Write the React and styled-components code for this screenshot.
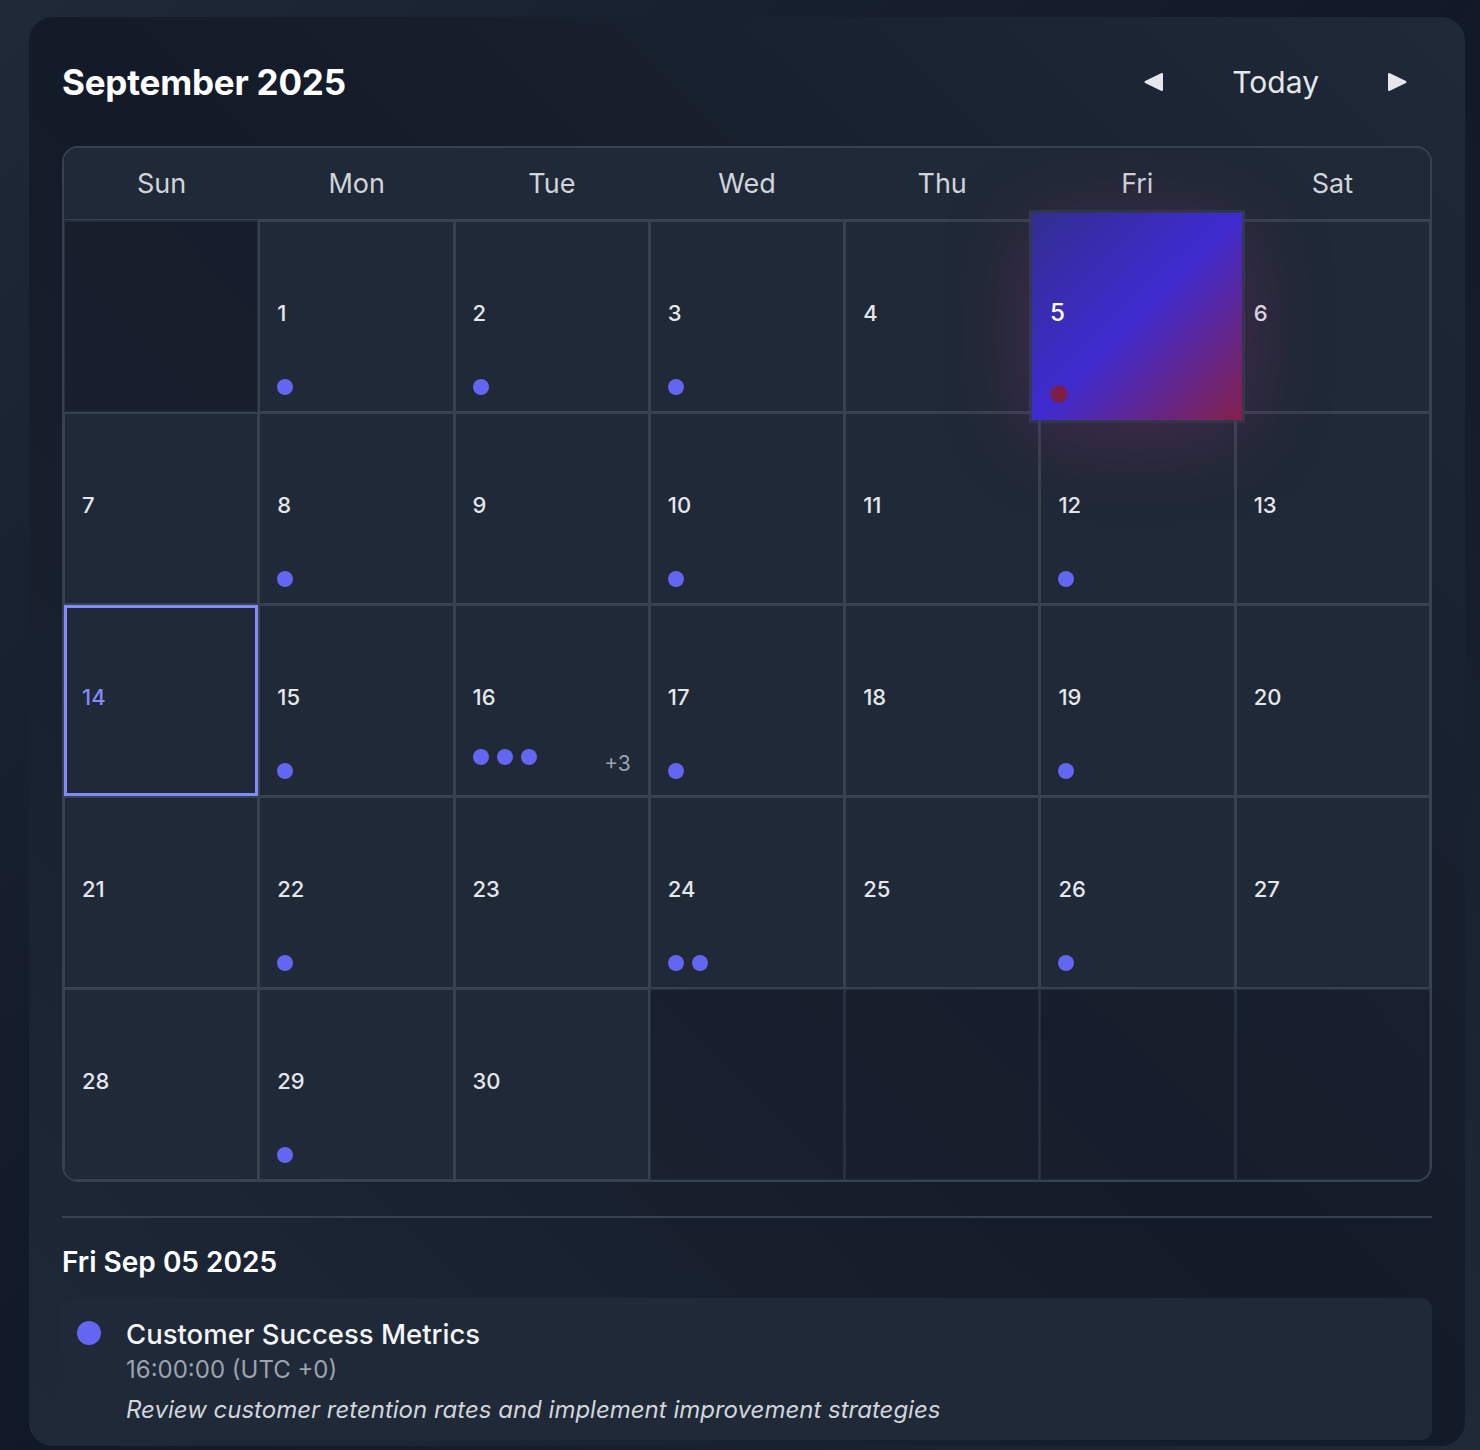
import React from 'react';
import styled, { createGlobalStyle } from 'styled-components';

const GlobalStyle = createGlobalStyle`
  html, body {
    margin: 0;
    padding: 0;
  }
  body {
    min-height: 1450px;
    background: linear-gradient(135deg, #1f2937 0%, #111827 50%, #1f2937 100%);
    font-family: Inter, "Noto Sans", "Liberation Sans", sans-serif;
    color: #e5e7eb;
    -webkit-font-smoothing: antialiased;
  }
`;

const DAY_NAMES = ['Sun', 'Mon', 'Tue', 'Wed', 'Thu', 'Fri', 'Sat'];

// event count per day of September 2025
const EVENT_COUNTS = {
  1: 1, 2: 1, 3: 1, 5: 1, 8: 1, 10: 1, 12: 1, 15: 1, 16: 6,
  17: 1, 19: 1, 22: 1, 24: 2, 26: 1, 29: 1,
};

const TODAY = 14;
const SELECTED = 5;
const FIRST_WEEKDAY = 1; // Sep 1 2025 is a Monday
const DAYS_IN_MONTH = 30;
const MAX_DOTS = 3;

const ArrowIcon = ({ direction }) => (
  <svg width="21" height="20" viewBox="0 0 21 20">
    {direction === 'left' ? (
      <path d="M19 2 L19 18 L2.5 10 Z" fill="currentColor" stroke="currentColor" strokeWidth="2" strokeLinejoin="round" />
    ) : (
      <path d="M2 2 L2 18 L18.5 10 Z" fill="currentColor" stroke="currentColor" strokeWidth="2" strokeLinejoin="round" />
    )}
  </svg>
);

const buildCells = () => {
  const cells = [];
  for (let i = 0; i < FIRST_WEEKDAY; i++) cells.push(null);
  for (let d = 1; d <= DAYS_IN_MONTH; d++) cells.push(d);
  while (cells.length % 7 !== 0) cells.push(null);
  return cells;
};

const DayCell = ({ day }) => {
  if (day === null) return <EmptyCell />;
  const count = EVENT_COUNTS[day] || 0;
  const shown = Math.min(count, MAX_DOTS);
  const isSelected = day === SELECTED;
  const isToday = day === TODAY;

  return (
    <Cell $selected={isSelected} $today={isToday}>
      <DayNumber $selected={isSelected} $today={isToday}>{day}</DayNumber>
      <DotRow>
        <Dots>
          {Array.from({ length: shown }).map((_, i) => (
            <Dot key={i} $selected={isSelected} />
          ))}
        </Dots>
        {count > MAX_DOTS && <MoreCount>+{count - MAX_DOTS}</MoreCount>}
      </DotRow>
    </Cell>
  );
};

const App = () => {
  const cells = buildCells();

  return (
    <>
      <GlobalStyle />
      <Page>
        <Card>
          <Header>
            <MonthTitle>September 2025</MonthTitle>
            <Nav>
              <NavButton aria-label="Previous month"><ArrowIcon direction="left" /></NavButton>
              <NavButton>Today</NavButton>
              <NavButton aria-label="Next month"><ArrowIcon direction="right" /></NavButton>
            </Nav>
          </Header>

          <CalendarFrame>
            <WeekHeader>
              {DAY_NAMES.map(name => (
                <WeekDay key={name}>{name}</WeekDay>
              ))}
            </WeekHeader>
            <DaysGrid>
              {cells.map((day, i) => (
                <DayCell key={i} day={day} />
              ))}
            </DaysGrid>
          </CalendarFrame>

          <Divider />

          <SelectedDate>Fri Sep 05 2025</SelectedDate>

          <EventCard>
            <EventDot />
            <EventBody>
              <EventTitle>Customer Success Metrics</EventTitle>
              <EventTime>16:00:00 (UTC +0)</EventTime>
              <EventDescription>
                Review customer retention rates and implement improvement strategies
              </EventDescription>
            </EventBody>
          </EventCard>
        </Card>
      </Page>
    </>
  );
};

const Page = styled.div`
  padding: 17px 15px 0 29px;
`;

const Card = styled.div`
  background: linear-gradient(45deg, #1f2937 0%, #131a28 50%, #1f2937 100%);
  border-radius: 24px;
  padding: 32px 33px 6px 33px;
`;

const Header = styled.div`
  display: flex;
  justify-content: space-between;
  align-items: center;
  height: 66px;
  margin-bottom: 31px;
`;

const MonthTitle = styled.h1`
  margin: 0;
  font-size: 35px;
  font-weight: 700;
  color: #ffffff;
  letter-spacing: -0.2px;
`;

const Nav = styled.div`
  display: flex;
  align-items: center;
  gap: 20px;
`;

const NavButton = styled.button`
  display: flex;
  align-items: center;
  justify-content: center;
  background: transparent;
  border: none;
  padding: 8px 24px;
  color: #e5e7eb;
  font-family: inherit;
  font-size: 30px;
  font-weight: 400;
  cursor: pointer;
`;

const CalendarFrame = styled.div`
  border: 2px solid #374151;
  border-radius: 16px;
  overflow: hidden;
`;

const WeekHeader = styled.div`
  display: grid;
  grid-template-columns: repeat(7, 1fr);
  height: 71px;
  background: #1f2937;
  border-bottom: 1px solid #374151;
`;

const WeekDay = styled.div`
  display: flex;
  align-items: center;
  justify-content: center;
  font-size: 27px;
  font-weight: 400;
  color: #d1d5db;
`;

const DaysGrid = styled.div`
  display: grid;
  grid-template-columns: repeat(7, 1fr);
  grid-auto-rows: 191px;
  gap: 1px;
  padding-top: 1px;
`;

const Cell = styled.div`
  position: relative;
  z-index: ${props => (props.$selected ? 2 : 0)};
  display: flex;
  flex-direction: column;
  padding: 17px 17px 16px 17px;
  background: ${props => props.$selected
    ? 'linear-gradient(135deg, #322e90 0%, #3f2bd0 50%, #84204b 100%)'
    : '#1f2937'};
  border: ${props => (props.$today ? '3px solid #818cf8' : '1px solid #374151')};
  box-shadow: ${props => props.$selected
    ? '0 0 0 1px #374151, 0 12px 80px rgba(170, 45, 130, 0.3)'
    : '0 0 0 1px #374151'};
  transform: ${props => (props.$selected ? 'scale(1.1)' : 'none')};
  ${props => props.$today && 'padding: 15px 15px 14px 15px;'}
`;

const EmptyCell = styled.div`
  background: rgba(31, 41, 55, 0.25);
  border: 1px solid rgba(55, 65, 81, 0.45);
  box-shadow: 0 0 0 1px rgba(55, 65, 81, 0.45);
`;

const DayNumber = styled.div`
  margin-top: 60px;
  font-size: 22px;
  line-height: 28px;
  font-weight: 500;
  color: ${props => props.$selected ? '#ffffff' : props.$today ? '#818cf8' : '#e5e7eb'};
`;

const DotRow = styled.div`
  margin-top: auto;
  display: flex;
  justify-content: space-between;
  align-items: flex-start;
  min-height: 16px;
`;

const Dots = styled.div`
  display: flex;
  gap: 8px;
`;

const Dot = styled.span`
  width: 16px;
  height: 16px;
  border-radius: 50%;
  background: ${props => (props.$selected ? '#7c1f48' : '#6366f1')};
`;

const MoreCount = styled.span`
  font-size: 21px;
  line-height: 30px;
  color: #9ca3af;
`;

const Divider = styled.hr`
  margin: 34px 0 0 0;
  border: none;
  height: 2px;
  background: #374151;
`;

const SelectedDate = styled.h2`
  margin: 26px 0 18px 0;
  font-size: 28px;
  line-height: 36px;
  font-weight: 600;
  color: #ffffff;
`;

const EventCard = styled.div`
  display: flex;
  align-items: flex-start;
  gap: 25px;
  padding: 18px 15px 14px 15px;
  background: #1f2937;
  border-radius: 10px;
`;

const EventDot = styled.span`
  flex: none;
  width: 24px;
  height: 24px;
  margin-top: 5px;
  border-radius: 50%;
  background: #6366f1;
`;

const EventBody = styled.div`
  display: flex;
  flex-direction: column;
`;

const EventTitle = styled.div`
  font-size: 27.5px;
  line-height: 36px;
  font-weight: 500;
  color: #f3f4f6;
`;

const EventTime = styled.div`
  margin-top: 2px;
  font-size: 24px;
  line-height: 32px;
  color: #9ca3af;
`;

const EventDescription = styled.div`
  margin-top: 8px;
  font-size: 24px;
  line-height: 32px;
  font-style: italic;
  color: #d1d5db;
`;

export default App;
